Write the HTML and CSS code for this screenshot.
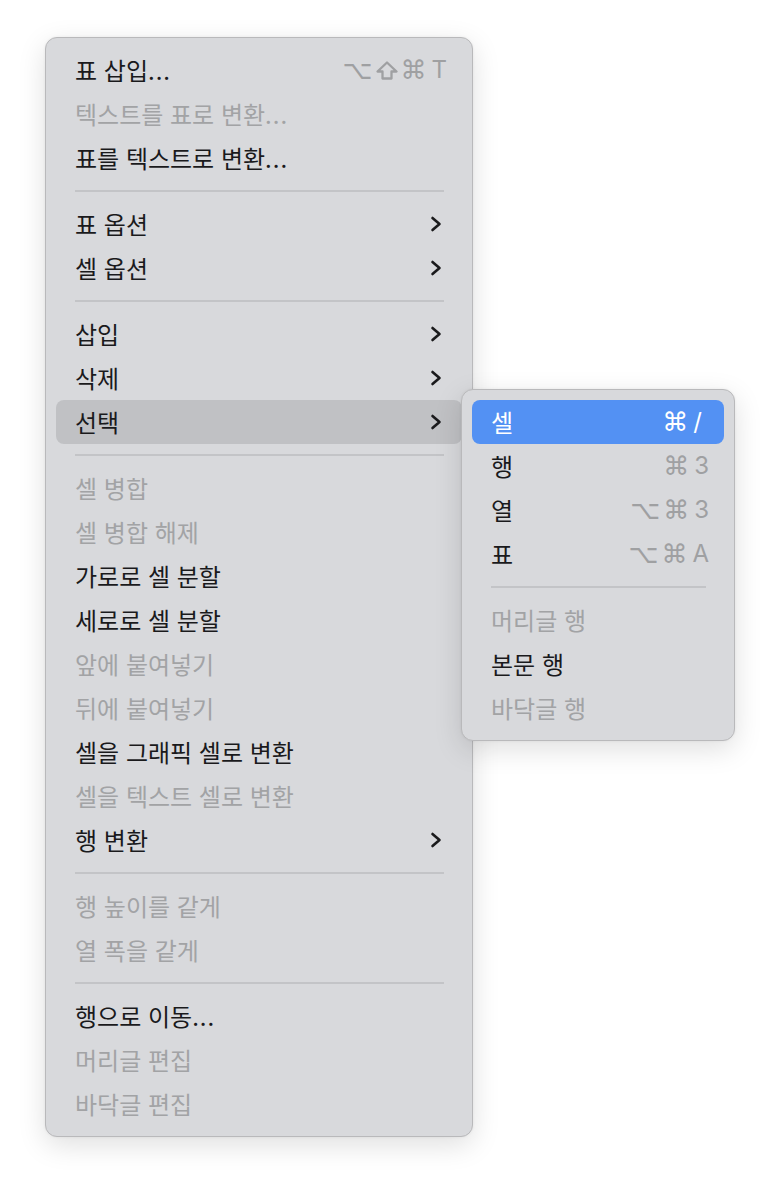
FILE: index.html
```html
<!DOCTYPE html>
<html lang="ko">
<head>
<meta charset="utf-8">
<link rel="stylesheet" href="styles.css">
</head>
<body>
<div class="stage">
  <div class="menu main">
    <div class="item"><span class="label">표 삽입<span class="dots">...</span></span><span class="keys"><span>⌥</span><svg class="shift" viewBox="0 0 22 19"><path d="M11 1.5 L20.5 10.5 L15.5 10.5 L15.5 17.5 L6.5 17.5 L6.5 10.5 L1.5 10.5 Z"/></svg><span>⌘</span><span class="ch">T</span></span></div>
    <div class="item disabled"><span class="label">텍스트를 표로 변환<span class="dots">...</span></span></div>
    <div class="item"><span class="label">표를 텍스트로 변환<span class="dots">...</span></span></div>
    <div class="sep"></div>
    <div class="item"><span class="label">표 옵션</span><svg class="chev" viewBox="0 0 12 16"><polyline points="2.5,2 9.5,8 2.5,14"/></svg></div>
    <div class="item"><span class="label">셀 옵션</span><svg class="chev" viewBox="0 0 12 16"><polyline points="2.5,2 9.5,8 2.5,14"/></svg></div>
    <div class="sep"></div>
    <div class="item"><span class="label">삽입</span><svg class="chev" viewBox="0 0 12 16"><polyline points="2.5,2 9.5,8 2.5,14"/></svg></div>
    <div class="item"><span class="label">삭제</span><svg class="chev" viewBox="0 0 12 16"><polyline points="2.5,2 9.5,8 2.5,14"/></svg></div>
    <div class="item open"><span class="label">선택</span><svg class="chev" viewBox="0 0 12 16"><polyline points="2.5,2 9.5,8 2.5,14"/></svg></div>
    <div class="sep"></div>
    <div class="item disabled"><span class="label">셀 병합</span></div>
    <div class="item disabled"><span class="label">셀 병합 해제</span></div>
    <div class="item"><span class="label">가로로 셀 분할</span></div>
    <div class="item"><span class="label">세로로 셀 분할</span></div>
    <div class="item disabled"><span class="label">앞에 붙여넣기</span></div>
    <div class="item disabled"><span class="label">뒤에 붙여넣기</span></div>
    <div class="item"><span class="label">셀을 그래픽 셀로 변환</span></div>
    <div class="item disabled"><span class="label">셀을 텍스트 셀로 변환</span></div>
    <div class="item"><span class="label">행 변환</span><svg class="chev" viewBox="0 0 12 16"><polyline points="2.5,2 9.5,8 2.5,14"/></svg></div>
    <div class="sep"></div>
    <div class="item disabled"><span class="label">행 높이를 같게</span></div>
    <div class="item disabled"><span class="label">열 폭을 같게</span></div>
    <div class="sep"></div>
    <div class="item"><span class="label">행으로 이동<span class="dots">...</span></span></div>
    <div class="item disabled"><span class="label">머리글 편집</span></div>
    <div class="item disabled"><span class="label">바닥글 편집</span></div>
  </div>
  <div class="menu sub">
    <div class="item active"><span class="label">셀</span><span class="keys"><span>⌘</span><span class="ch slash">/</span></span></div>
    <div class="item"><span class="label">행</span><span class="keys"><span>⌘</span><span class="ch">3</span></span></div>
    <div class="item"><span class="label">열</span><span class="keys"><span>⌥</span><span>⌘</span><span class="ch">3</span></span></div>
    <div class="item"><span class="label">표</span><span class="keys"><span>⌥</span><span>⌘</span><span class="ch">A</span></span></div>
    <div class="sep"></div>
    <div class="item disabled"><span class="label">머리글 행</span></div>
    <div class="item"><span class="label">본문 행</span></div>
    <div class="item disabled"><span class="label">바닥글 행</span></div>
  </div>
</div>
</body>
</html>
```

FILE: styles.css
```css
* { box-sizing: border-box; }
html, body { margin: 0; padding: 0; background: #ffffff; }
body {
  font-family: "Noto Sans CJK KR", "Noto Sans", sans-serif;
  color: #1a1a1c;
}
.stage {
  position: relative;
  padding: 37px 0 0 45px;
  width: 780px;
  height: 1190px;
}
.menu {
  background: #d8d9dc;
  border: 1px solid #b9b9bb;
  border-radius: 12px;
  padding: 10px 10px;
  box-shadow: 0 8px 28px rgba(0,0,0,0.13), 0 0 3px rgba(0,0,0,0.06);
  display: flex;
  flex-direction: column;
}
.main { width: 428px; }
.sub {
  position: absolute;
  left: 461px;
  top: 389px;
  width: 274px;
}
.item {
  height: 44px;
  display: flex;
  align-items: center;
  justify-content: space-between;
  padding: 0 15px 0 19px;
  border-radius: 8px;
  font-size: 24px;
  font-weight: 400;
  color: #1a1a1c;
}
.item.disabled { color: #a2a3a5; }
.item.open { background: #c0c1c4; }
.item.active { background: #5391f3; color: #ffffff; }
.label { white-space: nowrap; line-height: 1; }
.dots { letter-spacing: 1px; }
.keys {
  display: flex;
  align-items: center;
  gap: 3px;
  font-family: "DejaVu Sans", sans-serif;
  font-weight: 400;
  font-size: 26px;
  color: #9fa0a2;
  line-height: 1;
}
.keys .ch {
  font-family: "Inter", "Liberation Sans", sans-serif;
  font-size: 24px;
  margin-left: 2px;
}
.keys .slash { margin-right: 7px; }
.shift {
  width: 22px;
  height: 19px;
  fill: none;
  stroke: #9fa0a2;
  stroke-width: 2.3;
  stroke-linejoin: round;
}
.item.active .keys { color: #ffffff; }
.chev {
  width: 12px;
  height: 16px;
  margin-right: 5px;
  fill: none;
  stroke: #1a1a1c;
  stroke-width: 2.6;
  stroke-linecap: round;
  stroke-linejoin: round;
}
.sep {
  height: 22px;
  display: flex;
  align-items: center;
  padding: 0 18px 0 19px;
}
.sep::before {
  content: "";
  display: block;
  flex: 1;
  height: 2px;
  background: #c3c4c7;
}
```
